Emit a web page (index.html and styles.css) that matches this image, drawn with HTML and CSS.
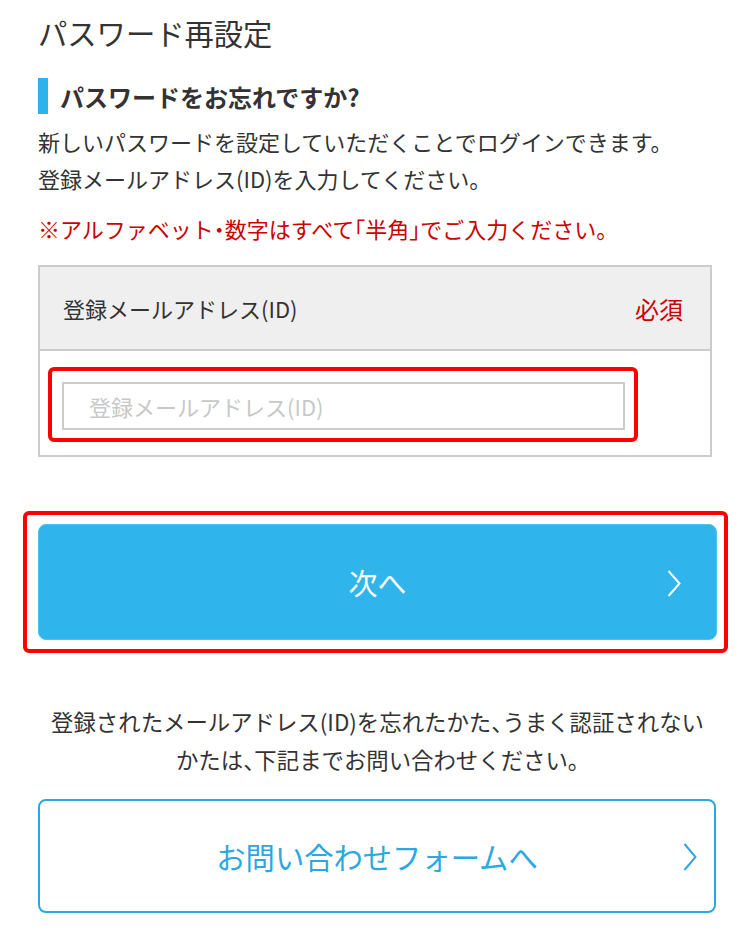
FILE: index.html
```html
<!DOCTYPE html>
<html lang="ja">
<head>
<meta charset="utf-8">
<title>パスワード再設定</title>
<link rel="stylesheet" href="styles.css">
</head>
<body>
<main class="page">
  <h1 class="title">パスワード再設定</h1>
  <h2 class="heading"><span class="heading-bar"></span>パスワードをお忘れですか?</h2>
  <p class="lead">新しいパスワードを設定していただくことでログインできます。<br>登録メールアドレス(ID)を入力してください。</p>
  <p class="note">※アルファベット・数字はすべて「半角」でご入力ください。</p>

  <div class="form-table">
    <div class="form-head">
      <span class="form-label">登録メールアドレス(ID)</span>
      <span class="required">必須</span>
    </div>
    <div class="form-body">
      <div class="mark mark-input">
        <input class="text-input" type="text" placeholder="登録メールアドレス(ID)">
      </div>
    </div>
  </div>

  <div class="mark mark-button">
    <button class="btn-primary" type="button">
      <span class="btn-label">次へ</span>
      <svg class="chev" width="14" height="27" viewBox="0 0 14 27"><polyline points="1.5,1 12.5,13.5 1.5,26" fill="none" stroke="#ffffff" stroke-width="2"/></svg>
    </button>
  </div>

  <p class="help">登録されたメールアドレス(ID)を忘れたかた、うまく認証されない<br>かたは、下記までお問い合わせください。</p>

  <a class="btn-outline" href="#">
    <span class="btn-label">お問い合わせフォームへ</span>
    <svg class="chev chev-outline" width="14" height="28" viewBox="0 0 14 28"><polyline points="1.5,1 12.5,14 1.5,27" fill="none" stroke="#2aa8e0" stroke-width="2"/></svg>
  </a>
</main>
</body>
</html>
```

FILE: styles.css
```css
* { box-sizing: border-box; }

html, body {
  margin: 0;
  padding: 0;
  background: #ffffff;
}

body {
  font-family: "Noto Sans CJK JP", "Noto Sans", sans-serif;
  color: #333333;
}

.page {
  padding: 12px 33px 30px 38px;
}

.title {
  margin: 0;
  font-size: 29.3px;
  line-height: 40px;
  font-weight: 400;
  color: #333333;
}

.heading {
  margin: 26px 0 0;
  display: flex;
  align-items: center;
  height: 36px;
  font-size: 24px;
  font-weight: 700;
  color: #333333;
}

.heading-bar {
  width: 10px;
  height: 36px;
  background: #2db2ea;
  margin-right: 12px;
  flex: none;
}

.lead {
  margin: 9px 0 0;
  font-size: 22px;
  line-height: 37px;
}

.note {
  margin: 13px 0 0;
  font-size: 22px;
  line-height: 37px;
  color: #cc0000;
  font-feature-settings: "halt";
}

.form-table {
  margin-top: 18px;
  width: 674px;
  border: 2px solid #cccccc;
}

.form-head {
  display: flex;
  align-items: center;
  justify-content: space-between;
  height: 84px;
  padding: 0 27px 0 23px;
  background: #efefef;
  border-bottom: 2px solid #cccccc;
}

.form-label {
  font-size: 22px;
  color: #333333;
}

.required {
  font-size: 24px;
  color: #cc0000;
}

.form-body {
  padding: 16px 0 13px 8px;
}

.mark {
  border: 4px solid #ff0000;
  border-radius: 6px;
}

.mark-input {
  width: 590px;
  padding: 11px 9px 8px 10px;
}

.text-input {
  display: block;
  width: 100%;
  height: 48px;
  border: 2px solid #cccccc;
  border-radius: 0;
  padding: 0 0 0 25px;
  font-family: inherit;
  font-size: 22px;
  color: #333333;
  background: #ffffff;
  outline: none;
}

.text-input::placeholder {
  color: #c8c8c8;
}

.mark-button {
  margin: 54px 0 0 -15px;
  width: 705px;
  padding: 9px 7px 9px 11px;
}

.btn-primary {
  position: relative;
  display: flex;
  align-items: center;
  justify-content: center;
  width: 100%;
  height: 116px;
  border: 1px solid #52c0ee;
  border-radius: 8px;
  background: #30b4ec;
  color: #ffffff;
  font-family: inherit;
  font-size: 29px;
  padding: 0;
}

.btn-primary .chev {
  position: absolute;
  right: 35px;
  top: 45px;
}

.help {
  margin: 49px 0 0;
  font-size: 22.4px;
  line-height: 38px;
  text-align: center;
  font-feature-settings: "halt";
  width: 679px;
}

.btn-outline {
  position: relative;
  display: flex;
  align-items: center;
  justify-content: center;
  margin-top: 21px;
  width: 678px;
  height: 114px;
  border: 2px solid #2aa8e0;
  border-radius: 8px;
  color: #2aa8e0;
  font-size: 29.3px;
  text-decoration: none;
}

.btn-outline .chev {
  position: absolute;
  right: 17px;
  top: 42px;
}
```
